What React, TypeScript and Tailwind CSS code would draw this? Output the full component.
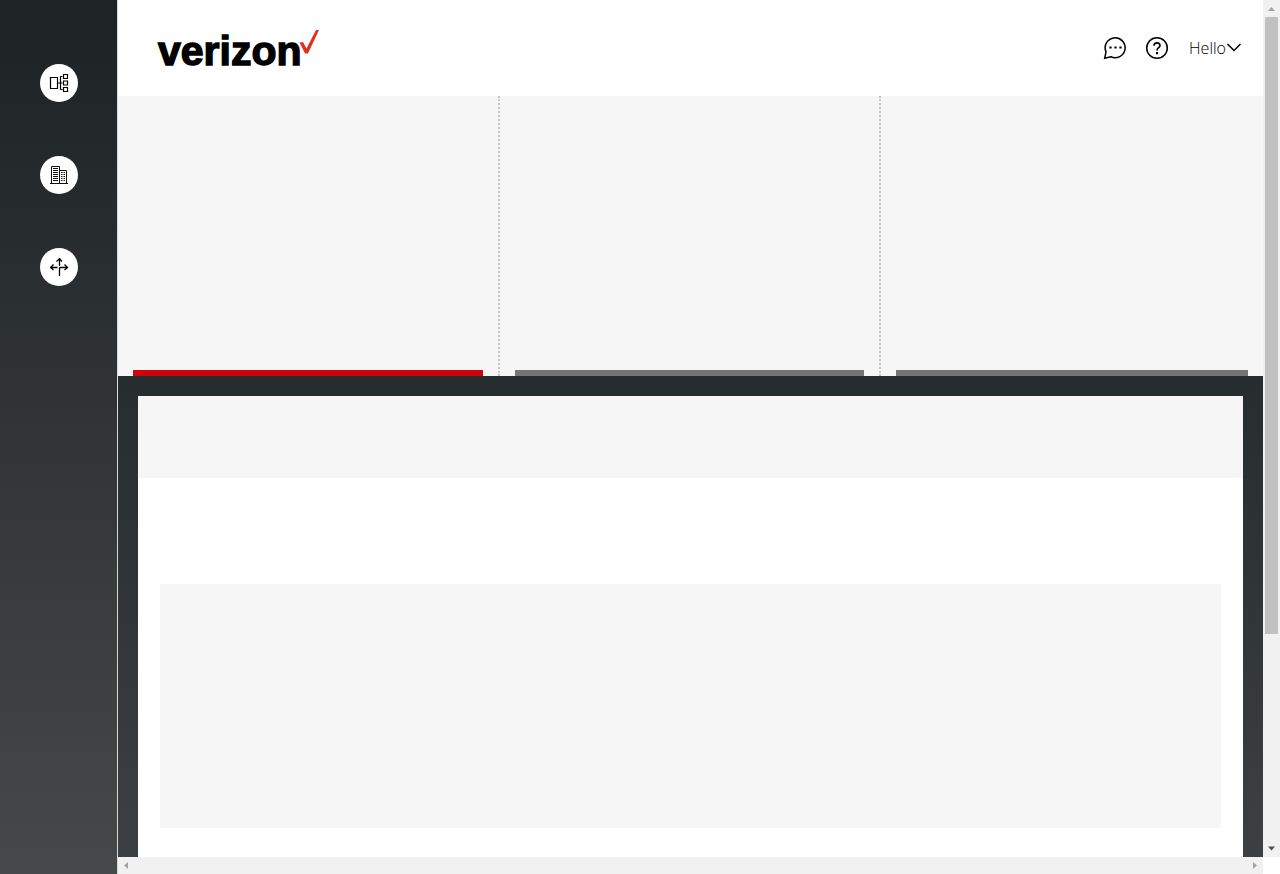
import React from "react";

function VerizonLogo() {
  return (
    <svg width="164" height="56" viewBox="0 0 164 56" role="img" aria-label="verizon">
      <text
        x="1"
        y="45"
        fill="#000"
        stroke="#000"
        strokeWidth="1.4"
        fontFamily="'Liberation Sans', Arial, sans-serif"
        fontWeight="700"
        fontSize="41"
      >
        verizon
      </text>
      <path d="M142.500 22.500L146 22L149.500 28.500L159 10H162L151 33.500H148Z" fill="#e0301e" />
    </svg>
  );
}

function HierarchyIcon() {
  return (
    <svg width="20" height="20" viewBox="0 0 20 20" fill="none" stroke="#000" strokeWidth="1.2" aria-hidden="true">
      <path d="M1.500 4.500h7v11h-7zM8.500 10h5M11.500 9.500V3.500h2M11.500 9.500v7h2" />
      <path d="M14.500 1.500h4v4h-4zM14.500 8h4v4h-4zM14.500 14.500h4v4h-4z" />
    </svg>
  );
}

function BuildingIcon() {
  return (
    <svg width="20" height="20" viewBox="0 0 20 20" fill="none" stroke="#111" aria-hidden="true">
      <path d="M1 18.500h18M2.500 18V1.500h8V18M10.500 5.500h7V18" />
      <path d="M4 3.500h5M4 5.500h5M4 7.500h5M4 9.500h5M4 11.500h5M4 13.500h5M4 15.500h5" />
      <path d="M12 7.500h4M12 9.500h4M12 11.500h4M12 13.500h4M12 15.500h4" strokeDasharray="1.5 1" />
    </svg>
  );
}

function DirectionsIcon() {
  return (
    <svg width="20" height="20" viewBox="0 0 20 20" fill="none" stroke="#000" strokeWidth="1.3" aria-hidden="true">
      <path d="M10.500 19V11.500Q10.500 10.500 11.500 10.500H18.500M10.500 9V1.500M1.500 10.500H8.500" />
      <path d="M7.500 4.500L10.500 1.700L13 4.500M4.500 7.500L1.700 10.500L4.500 13M15.500 7.500L18.500 10.500L15.500 13" />
    </svg>
  );
}

function ChatIcon() {
  return (
    <svg width="24" height="24" viewBox="0 0 24 24" fill="none" stroke="#000" strokeWidth="1.5" aria-hidden="true">
      <path d="M3 15.800A10 9.900 0 1 1 7.800 20.700L1.700 22.300Z" strokeLinejoin="miter" />
      <path d="M6.400 11.500h2.200M11.400 11.500h2.200M16.400 11.500h2.200" strokeWidth="2.200" />
    </svg>
  );
}

function HelpIcon() {
  return (
    <svg width="24" height="24" viewBox="0 0 24 24" fill="none" stroke="#000" strokeWidth="1.5" aria-hidden="true">
      <circle cx="12" cy="12" r="10.300" />
      <path d="M9 9.800C9 5.800 15 5.900 15 9.500C15 11.700 12 11.700 12 14.400" strokeWidth="1.700" />
      <path d="M12 16v2.200" strokeWidth="2" />
    </svg>
  );
}

const navItems = [
  { label: "Hierarchy", icon: <HierarchyIcon /> },
  { label: "Company", icon: <BuildingIcon /> },
  { label: "Directions", icon: <DirectionsIcon /> },
];

function Sidebar() {
  return (
    <nav className="flex w-[118px] shrink-0 flex-col items-center gap-[54px] border-r border-[#d8d8d8] bg-linear-to-b from-[#1d2225] to-[#464949] pt-16">
      {navItems.map((item) => (
        <button
          key={item.label}
          type="button"
          aria-label={item.label}
          className="flex size-[38px] items-center justify-center rounded-full bg-white"
        >
          {item.icon}
        </button>
      ))}
    </nav>
  );
}

function Header() {
  return (
    <header className="flex h-24 shrink-0 items-center justify-between bg-white pr-[21px] pl-[39px]">
      <a href="#home">
        <VerizonLogo />
      </a>
      <div className="flex items-center gap-5">
        <div className="flex items-center gap-[18px]">
          <button type="button" aria-label="Chat">
            <ChatIcon />
          </button>
          <button type="button" aria-label="Help">
            <HelpIcon />
          </button>
        </div>
        <button
          type="button"
          className="flex items-center font-['Open_Sans',sans-serif] text-base font-light text-black"
        >
          Hello
          <svg width="16" height="16" viewBox="0 0 16 16" fill="none" stroke="#000" strokeWidth="1.5" aria-hidden="true">
            <path d="M1.500 4L8 10.500L14.500 4" />
          </svg>
        </button>
      </div>
    </header>
  );
}

function Summary() {
  return (
    <section className="grid h-[280px] shrink-0 grid-cols-3 bg-[#f6f6f6]">
      <div className="flex items-end border-r-2 border-dotted border-[#c4c4c4] px-[15px]">
        <div className="h-1.5 w-full bg-[#cd040b]" />
      </div>
      <div className="flex items-end border-r-2 border-dotted border-[#c4c4c4] px-[15px]">
        <div className="h-1.5 w-full bg-[#747676]" />
      </div>
      <div className="flex items-end px-[15px]">
        <div className="h-1.5 w-full bg-[#747676]" />
      </div>
    </section>
  );
}

function Details() {
  return (
    <section className="flex min-h-0 flex-1 flex-col bg-linear-to-b from-[#272c2f] to-[#3c4042] px-5 pt-5">
      <div className="h-[82px] shrink-0 bg-[#f6f6f6]" />
      <div className="min-h-0 flex-1 bg-white px-[22px] pt-[106px]">
        <div className="h-[244px] bg-[#f6f6f6]" />
      </div>
    </section>
  );
}

function VerticalScrollbar() {
  return (
    <div className="flex w-[17px] shrink-0 flex-col items-center justify-between bg-[#f1f1f1]" aria-hidden="true">
      <svg width="17" height="17" viewBox="0 0 17 17" className="shrink-0">
        <path d="M5 11h7L8.500 7Z" fill="#a3a3a3" />
      </svg>
      <div className="w-full flex-1 px-0.5">
        <div className="h-[75%] bg-[#c1c1c1]" />
      </div>
      <svg width="17" height="17" viewBox="0 0 17 17" className="shrink-0">
        <path d="M5 6.500h7L8.500 10.500Z" fill="#505050" />
      </svg>
    </div>
  );
}

function HorizontalScrollbar() {
  return (
    <div className="flex h-[17px] shrink-0" aria-hidden="true">
      <div className="flex flex-1 justify-between bg-[#f1f1f1]">
        <svg width="17" height="17" viewBox="0 0 17 17">
          <path d="M10 5v7L6 8.500Z" fill="#a3a3a3" />
        </svg>
        <svg width="17" height="17" viewBox="0 0 17 17">
          <path d="M7 5v7L11 8.500Z" fill="#a3a3a3" />
        </svg>
      </div>
      <div className="w-[17px] bg-white" />
    </div>
  );
}

export default function App() {
  return (
    <div className="flex h-screen overflow-hidden">
      <Sidebar />
      <div className="flex min-w-0 flex-1 flex-col">
        <div className="flex min-h-0 flex-1">
          <main className="flex min-w-0 flex-1 flex-col">
            <Header />
            <Summary />
            <Details />
          </main>
          <VerticalScrollbar />
        </div>
        <HorizontalScrollbar />
      </div>
    </div>
  );
}
